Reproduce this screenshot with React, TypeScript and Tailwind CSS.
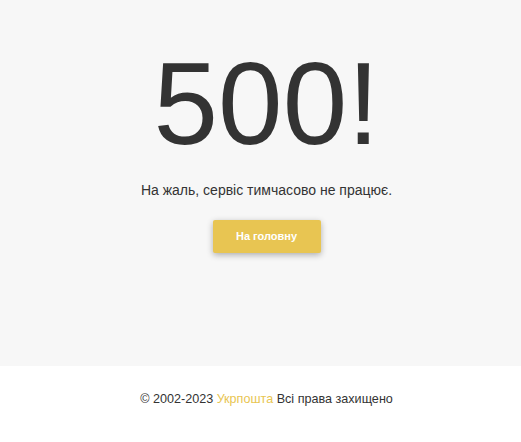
export default function App() {
  return (
    <div className="flex min-h-[442px] flex-col pl-[12px] font-['Liberation_Sans',Arial,sans-serif] text-[#333]">
      <main className="-ml-[12px] flex h-[366px] flex-col items-center bg-[#f7f7f7] pt-[44px] pl-[12px]">
        <h1 className="text-[116px] leading-[120px] font-normal">500!</h1>
        <p className="mt-[16px] text-[14px] leading-[20px]">На жаль, сервіс тимчасово не працює.</p>
        <a
          href="#"
          className="mt-[20px] flex h-[33px] w-[108px] items-center justify-center rounded-[2px] bg-[#e8c552] text-[11px] font-bold text-white shadow-[0_2px_6px_rgba(0,0,0,0.3)]"
        >
          На головну
        </a>
      </main>
      <footer className="flex flex-1 items-start justify-center bg-white pt-[24px] text-[12.6px]">
        <span>
          © 2002-2023 <span className="text-[#e8c552]">Укрпошта</span> Всі права захищено
        </span>
      </footer>
    </div>
  );
}
